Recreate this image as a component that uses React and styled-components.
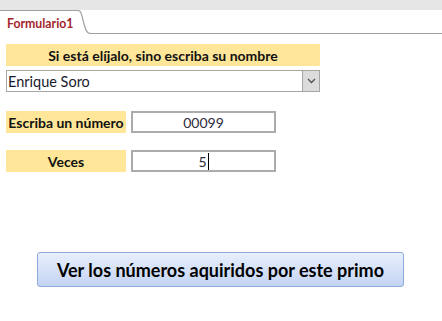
import styled, { createGlobalStyle } from "styled-components"

const GlobalStyle = createGlobalStyle`
html, body{
  margin: 0;
  padding: 0;
  background: #ffffff;
}
body{
  font-family: Lato, "Liberation Sans", sans-serif;
  width: 442px;
  height: 321px;
  overflow: hidden;
}
`

export default function App(){
  return(
    <Window>
      <GlobalStyle />
      <TopBand />
      <TabStrip>
        <Tab>Formulario1</Tab>
        <TabCorner width="15" height="24" viewBox="0 0 15 24">
          <path d="M0 0.5 H2 C5 0.5 5.5 4 8 14 C10 21 11 23.5 15 23.5" fill="#ffffff" stroke="#a0a0a0" strokeWidth="1.2" />
        </TabCorner>
        <TabFiller />
      </TabStrip>
      <Form>
        <Label $width="314px">Si está elíjalo, sino escriba su nombre</Label>
        <Combo>
          <ComboText>Enrique Soro</ComboText>
          <ComboButton>
            <svg width="9" height="6" viewBox="0 0 9 6">
              <path d="M1 1 L4.5 4.5 L8 1" fill="none" stroke="#505050" strokeWidth="1.3" />
            </svg>
          </ComboButton>
        </Combo>
        <Row $top="19px">
          <Label $width="120px">Escriba un número</Label>
          <Field>00099</Field>
        </Row>
        <Row $top="17px">
          <Label $width="120px">Veces</Label>
          <Field>5<Caret /></Field>
        </Row>
        <Action>Ver los números aquiridos por este primo</Action>
      </Form>
    </Window>
  )
}

const Window = styled.div`
width: 442px;
height: 321px;
display: flex;
flex-direction: column;
background: #ffffff;
`

const TopBand = styled.div`
height: 10px;
background: #e6e6e6;
`

const TabStrip = styled.div`
display: flex;
align-items: stretch;
height: 24px;
`

const Tab = styled.div`
display: flex;
align-items: center;
padding: 1px 2px 0 7px;
border-top: 1px solid #a0a0a0;
font-size: 12.3px;
font-weight: bold;
color: #a4262c;
background: #ffffff;
`

const TabCorner = styled.svg`
display: block;
flex: none;
`

const TabFiller = styled.div`
flex: 1;
border-bottom: 1px solid #a0a0a0;
`

const Form = styled.div`
display: flex;
flex-direction: column;
align-items: flex-start;
padding: 10px 0 0 6px;
`

const Label = styled.div`
width: ${props => props.$width};
height: 22px;
display: flex;
align-items: center;
justify-content: center;
background: #ffe699;
font-size: 14px;
font-weight: bold;
color: #111111;
white-space: nowrap;
`

const Combo = styled.div`
width: 314px;
height: 22px;
margin-top: 4px;
box-sizing: border-box;
display: flex;
border: 1px solid #a6a6a6;
background: #ffffff;
`

const ComboText = styled.div`
flex: 1;
display: flex;
align-items: center;
padding-left: 1px;
font-size: 14.5px;
color: #1a1a2e;
`

const ComboButton = styled.div`
width: 16px;
display: flex;
align-items: center;
justify-content: center;
background: #dcdcdc;
border-left: 1px solid #a6a6a6;
`

const Row = styled.div`
display: flex;
align-items: center;
gap: 5px;
margin-top: ${props => props.$top};
`

const Field = styled.div`
width: 145px;
height: 22px;
box-sizing: border-box;
display: flex;
align-items: center;
justify-content: center;
border: 2px solid #ababab;
font-size: 14px;
color: #2b2b3a;
`

const Caret = styled.span`
display: inline-block;
width: 1px;
height: 17px;
margin-left: 1px;
background: #000000;
`

const Action = styled.div`
width: 367px;
height: 35px;
margin: 80px 0 0 31px;
box-sizing: border-box;
display: flex;
align-items: center;
justify-content: center;
border: 1px solid #8eaadb;
border-radius: 3px;
background: linear-gradient(#e8effc, #c3d4f3);
font-size: 18px;
font-weight: bold;
color: #000000;
`
